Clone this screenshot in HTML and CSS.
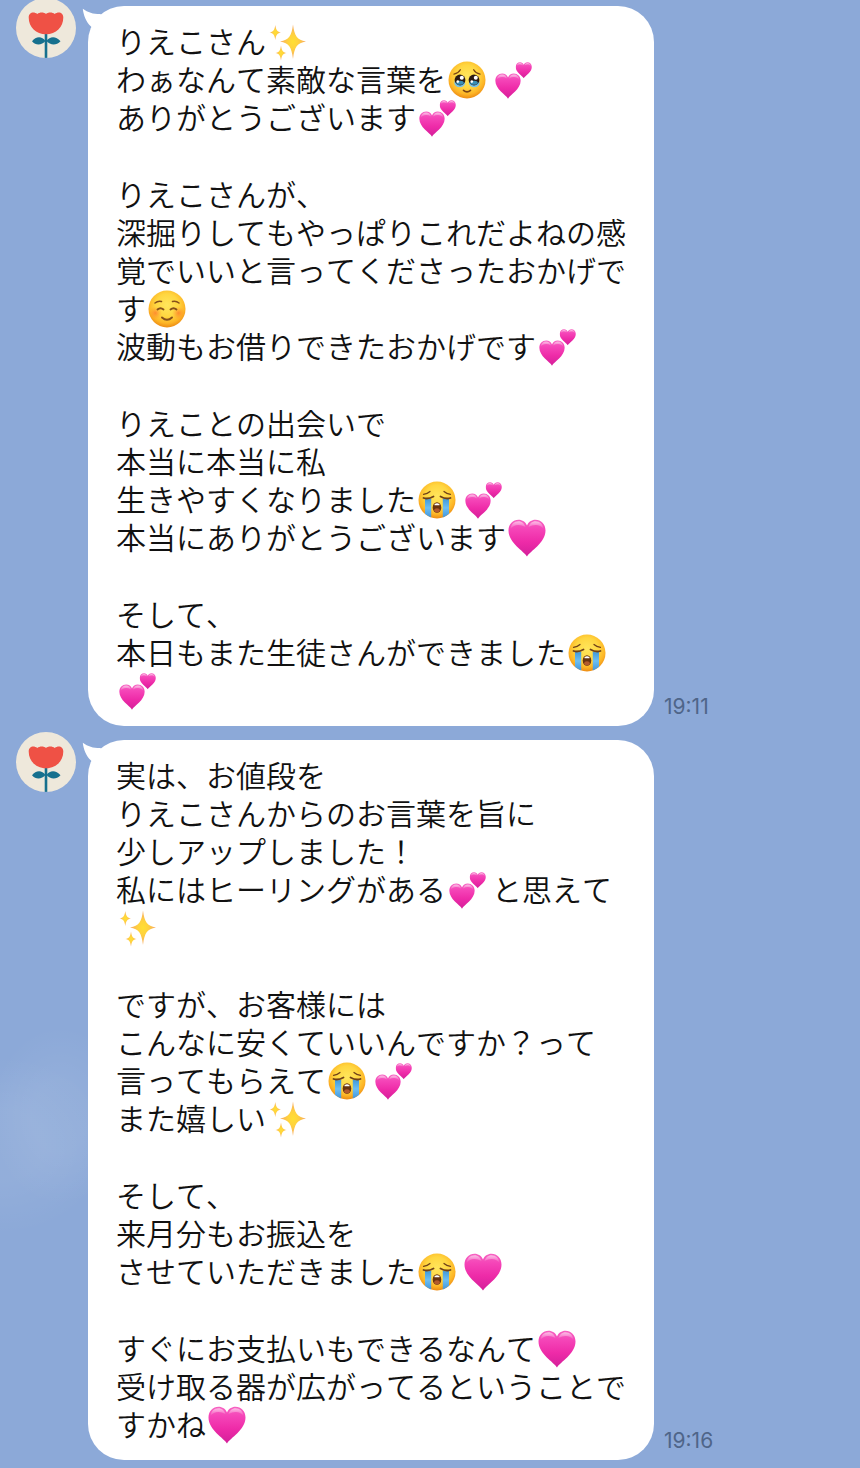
FILE: index.html
```html
<!DOCTYPE html>
<html lang="ja">
<head>
  <meta charset="UTF-8" />
  <meta name="viewport" content="width=device-width, initial-scale=1.0" />
  <title>トーク</title>
  <link rel="stylesheet" href="styles.css">
</head>
<body>
  <svg class="sprite" width="0" height="0" aria-hidden="true">
    <defs>
      <linearGradient id="pink" x1="0" y1="0" x2="0" y2="1">
        <stop offset="0" stop-color="#f763c2" />
        <stop offset="0.25" stop-color="#f545b8" />
        <stop offset="0.6" stop-color="#ee2ba8" />
        <stop offset="1" stop-color="#d41f9a" />
      </linearGradient>
      <linearGradient id="shine" x1="0" y1="0" x2="0" y2="1">
        <stop offset="0" stop-color="#fff" stop-opacity="0.6" />
        <stop offset="1" stop-color="#fff" stop-opacity="0" />
      </linearGradient>
      <radialGradient id="yellow" cx="0.5" cy="0.4" r="0.62">
        <stop offset="0" stop-color="#ffe65c" />
        <stop offset="0.5" stop-color="#ffd640" />
        <stop offset="0.78" stop-color="#fdb526" />
        <stop offset="1" stop-color="#ea8410" />
      </radialGradient>
      <radialGradient id="gold">
        <stop offset="0" stop-color="#ffdf33" />
        <stop offset="0.4" stop-color="#ffd23e" />
        <stop offset="1" stop-color="#f6a765" />
      </radialGradient>
      <radialGradient id="blush">
        <stop offset="0" stop-color="#ff6b2c" stop-opacity="0.65" />
        <stop offset="1" stop-color="#ff8a2c" stop-opacity="0" />
      </radialGradient>
      <linearGradient id="tear" x1="0" y1="0" x2="0" y2="1">
        <stop offset="0" stop-color="#3f97d8" />
        <stop offset="0.5" stop-color="#6dbff2" />
        <stop offset="1" stop-color="#4296dd" />
      </linearGradient>
    </defs>

    <symbol id="heart" viewBox="0 0 38 38">
      <path fill="url(#pink)" d="M19 37.5C16 32 .5 24 .5 11.5C.5 5 5 .8 10.5 .8C14.5 .8 17.5 3 19 6.5C20.5 3 23.5 .8 27.5 .8C33 .8 37.5 5 37.5 11.5C37.5 24 22 32 19 37.5Z" />
      <path fill="url(#shine)" d="M2.5 10C3 5 6 2.2 10.5 2.2C14 2.2 16.5 4.5 17.5 8C12 5 6 5 2.5 10ZM20.5 8C21.5 4.5 24 2.2 27.5 2.2C32 2.2 35 5 35.5 10C32 5 26 5 20.5 8Z" />
    </symbol>

    <symbol id="two-hearts" viewBox="0 0 38 38">
      <use href="#heart" x="1" y="12" width="26" height="26" />
      <use href="#heart" x="21.5" y="1" width="16.5" height="16.5" />
    </symbol>

    <symbol id="sparkles" viewBox="0 0 38 38">
      <g fill="url(#gold)">
        <path d="M25 1.5C26.5 13 29 17 38 18.5C29 20 26.500 24 25 36C23.500 24 21 20 12 18.5C21 17 23.5 13 25 1.5Z" />
        <path d="M7.3 2C8 7 9.500 9 13 9.5C9.500 10 8 12 7.3 17C6.600 12 5.1 10 1.6 9.5C5.1 9 6.6 7 7.3 2Z" />
        <path d="M13 22.5C13.700 27.5 15 29.5 18.5 30C15 30.5 13.7 32.5 13 37.5C12.3 32.5 11 30.5 7.5 30C11 29.5 12.3 27.5 13 22.5Z" />
      </g>
    </symbol>

    <symbol id="pleading" viewBox="0 0 38 38">
      <circle cx="19" cy="19" r="18.5" fill="url(#yellow)" />
      <g fill="none" stroke="#7a4312" stroke-width="1.3" stroke-linecap="round">
        <path d="M6 13.2C9 12.6 11 11.3 12.3 8.8" />
        <path d="M32 13.2C29 12.6 27 11.3 25.7 8.8" />
        <path d="M15.5 29.3Q19 32.3 22.5 29.3" stroke-width="1.6" />
      </g>
      <g fill="#79c3e8">
        <ellipse cx="11.7" cy="22" rx="5.4" ry="4.2" />
        <ellipse cx="26.3" cy="22" rx="5.4" ry="4.2" />
      </g>
      <g fill="#2b1b14">
        <circle cx="12" cy="19" r="5.4" />
        <circle cx="26" cy="19" r="5.4" />
      </g>
      <g fill="#3a8fb5">
        <ellipse cx="12" cy="21.8" rx="3.8" ry="2" />
        <ellipse cx="26" cy="21.8" rx="3.8" ry="2" />
      </g>
      <g fill="#fff">
        <circle cx="13.8" cy="16.8" r="2" />
        <circle cx="27.8" cy="16.8" r="2" />
        <circle cx="9.8" cy="20.6" r="1.3" />
        <circle cx="23.8" cy="20.6" r="1.3" />
      </g>
    </symbol>

    <symbol id="smiling" viewBox="0 0 38 38">
      <circle cx="19" cy="19" r="18.5" fill="url(#yellow)" />
      <circle cx="7.5" cy="23" r="6.5" fill="url(#blush)" />
      <circle cx="30.5" cy="23" r="6.5" fill="url(#blush)" />
      <g fill="none" stroke="#86501a" stroke-linecap="round" stroke-width="1.5">
        <path d="M7 13Q10 10.5 13.5 11.5" />
        <path d="M31 13Q28 10.5 24.5 11.5" />
        <path d="M9.5 19.5Q12.5 17 15.5 19.5" stroke-width="1.9" />
        <path d="M22.5 19.5Q25.5 17 28.5 19.5" stroke-width="1.9" />
        <path d="M14 27.5Q19 32 24 27.5" stroke-width="1.9" />
      </g>
    </symbol>

    <symbol id="crying" viewBox="0 0 38 38">
      <circle cx="19" cy="19" r="18.5" fill="url(#yellow)" />
      <path fill="url(#tear)" d="M7 17.5Q10 19 13.2 17.5V36.4Q9.5 35 7 32.8Z" />
      <path fill="url(#tear)" d="M31 17.5Q28 19 24.8 17.5V36.4Q28.5 35 31 32.8Z" />
      <g fill="none" stroke="#704018" stroke-linecap="round">
        <path d="M5.5 13.3Q9.5 12.8 12 10.5" stroke-width="1.2" />
        <path d="M32.5 13.3Q28.5 12.8 26 10.5" stroke-width="1.2" />
        <path d="M5.5 17Q10.5 18.5 15.5 15.5" stroke-width="1.8" />
        <path d="M32.5 17Q27.5 18.5 22.5 15.5" stroke-width="1.8" />
      </g>
      <ellipse cx="19" cy="26.5" rx="4.3" ry="5.3" fill="#69340f" />
      <path d="M16.5 23.3Q19 21.300 21.5 23.3V24.2H16.5Z" fill="#fff" />
      <ellipse cx="19" cy="29.3" rx="2.8" ry="2" fill="#b35a2c" />
    </symbol>

    <symbol id="tulip" viewBox="0 0 60 60">
      <circle cx="30" cy="30" r="30" fill="#eee8db" />
      <path fill="#16708e" d="M28.7 33H31.3V59.9H28.7Z" />
      <path fill="#16708e" d="M29.5 43C26 38 20 38 16 43.3C20 48 26 47 29.5 43ZM30.5 43C34 38 40 38 44.5 43.3C40 48 34 47 30.5 43Z" />
      <path fill="#ef5145" d="M12.7 19.5C12.7 14 18 13.3 21.3 16C23.5 14 28 14 30 16C32 14 36.5 14 38.7 16C42 13.3 47.3 14 47.3 19.5C47.3 29 40 36.3 30 36.3C20 36.3 12.7 29 12.7 19.5Z" />
    </symbol>

    <symbol id="tail" viewBox="0 0 28 28">
      <path fill="#fff" d="M.8 2.7C6 6.5 11 8 18 8L28 12L16 28L9 20.5C4 16 1.5 9 .8 2.7Z" />
    </symbol>
  </svg>

  <main class="chat">
    <article class="message">
      <svg class="avatar" role="img" aria-label="プロフィール"><use href="#tulip" /></svg>
      <div class="bubble">
        <svg class="tail" aria-hidden="true"><use href="#tail" /></svg>
        <p>りえこさん<svg class="emoji"><use href="#sparkles" /></svg><br>
        わぁなんて素敵な言葉を<svg class="emoji"><use href="#pleading" /></svg><svg class="emoji"><use href="#two-hearts" /></svg><br>
        ありがとうございます<svg class="emoji"><use href="#two-hearts" /></svg></p>
        <p>りえこさんが、<br>
        深掘りしてもやっぱりこれだよねの感覚でいいと言ってくださったおかげです<svg class="emoji"><use href="#smiling" /></svg><br>
        波動もお借りできたおかげです<svg class="emoji"><use href="#two-hearts" /></svg></p>
        <p>りえことの出会いで<br>
        本当に本当に私<br>
        生きやすくなりました<svg class="emoji"><use href="#crying" /></svg><svg class="emoji"><use href="#two-hearts" /></svg><br>
        本当にありがとうございます<svg class="emoji"><use href="#heart" /></svg></p>
        <p>そして、<br>
        本日もまた生徒さんができました<svg class="emoji"><use href="#crying" /></svg><svg class="emoji"><use href="#two-hearts" /></svg></p>
      </div>
      <time class="time">19:11</time>
    </article>

    <article class="message">
      <svg class="avatar" role="img" aria-label="プロフィール"><use href="#tulip" /></svg>
      <div class="bubble">
        <svg class="tail" aria-hidden="true"><use href="#tail" /></svg>
        <p>実は、お値段を<br>
        りえこさんからのお言葉を旨に<br>
        少しアップしました！<br>
        私にはヒーリングがある<svg class="emoji"><use href="#two-hearts" /></svg>と思えて<svg class="emoji"><use href="#sparkles" /></svg></p>
        <p>ですが、お客様には<br>
        こんなに安くていいんですか？って<br>
        言ってもらえて<svg class="emoji"><use href="#crying" /></svg><svg class="emoji"><use href="#two-hearts" /></svg><br>
        また嬉しい<svg class="emoji"><use href="#sparkles" /></svg></p>
        <p>そして、<br>
        来月分もお振込を<br>
        させていただきました<svg class="emoji"><use href="#crying" /></svg><svg class="emoji"><use href="#heart" /></svg></p>
        <p>すぐにお支払いもできるなんて<svg class="emoji"><use href="#heart" /></svg><br>
        受け取る器が広がってるということですかね<svg class="emoji"><use href="#heart" /></svg></p>
      </div>
      <time class="time">19:16</time>
    </article>
  </main>
</body>
</html>
```

FILE: styles.css
```css
* {
  box-sizing: border-box;
}

body {
  margin: 0;
  background-color: #8ca9d8;
  color: #111;
  font-family: "Noto Sans CJK JP", sans-serif;
  font-kerning: none;
}

.sprite {
  position: absolute;
}

/* sky background with a faint cloud on the left */
.chat {
  display: flex;
  flex-direction: column;
  gap: 14px;
  padding: 6px 16px 8px;
  background-image:
    radial-gradient(ellipse 70px 90px at 60px 76%, rgba(255, 255, 255, 0.06) 40%, transparent),
    radial-gradient(ellipse 110px 90px at 0 78%, rgba(255, 255, 255, 0.06) 40%, transparent);
}

.message {
  display: flex;
  align-items: flex-start;
}

.avatar {
  flex: none;
  width: 60px;
  height: 60px;
  margin: -8px 12px 0 0;
}

.bubble {
  position: relative;
  max-width: 566px;
  padding: 15px 28px 18px;
  border-radius: 36px;
  background-color: #fff;
  font-size: 30px;
  font-weight: 350;
  line-height: 38px;
}

.bubble p {
  margin: 0;
}

.bubble p + p {
  margin-top: 39px;
}

.tail {
  position: absolute;
  top: 0;
  left: -6px;
  width: 28px;
  height: 28px;
}

.emoji {
  width: 38px;
  height: 38px;
  margin: 2px 6px -2px 2px;
  vertical-align: top;
}

.time {
  align-self: flex-end;
  margin: 0 0 7px 10px;
  color: #4f6589;
  font-family: Inter, sans-serif;
  font-size: 21px;
  line-height: 24px;
}
```
